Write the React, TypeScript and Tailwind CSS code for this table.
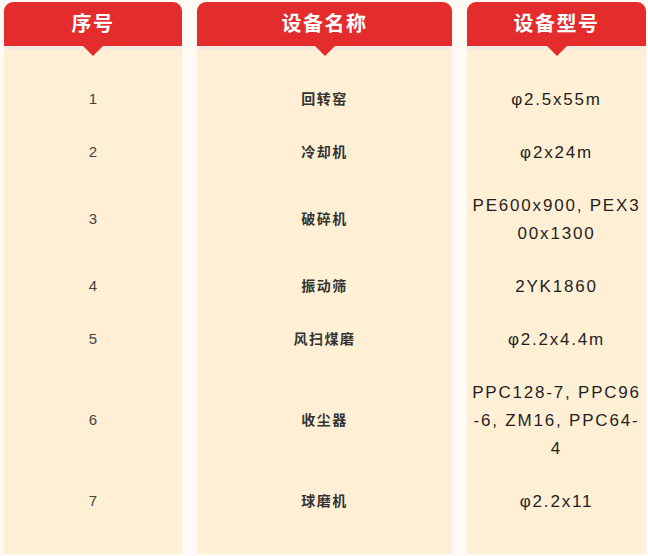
const rows = [
  { no: "1", name: "回转窑", model: "φ2.5x55m" },
  { no: "2", name: "冷却机", model: "φ2x24m" },
  { no: "3", name: "破碎机", model: "PE600x900, PEX300x1300" },
  { no: "4", name: "振动筛", model: "2YK1860" },
  { no: "5", name: "风扫煤磨", model: "φ2.2x4.4m" },
  { no: "6", name: "收尘器", model: "PPC128-7, PPC96-6, ZM16, PPC64-4" },
  { no: "7", name: "球磨机", model: "φ2.2x11" },
];

const headers = ["序号", "设备名称", "设备型号"];

function HeaderCell({ label }: { label: string }) {
  return (
    <div className="relative flex h-[48px] items-center justify-center rounded-t-[9px] border-b-4 border-[#f4eadf] bg-[#e42c2c]">
      <span className="text-[20px] font-bold tracking-[1.5px] text-white">{label}</span>
      <span className="absolute left-1/2 top-full z-10 -translate-x-1/2 border-x-[10px] border-t-[10px] border-x-transparent border-t-[#e42c2c]" />
    </div>
  );
}

export default function App() {
  return (
    <div
      className="min-h-[556px] w-[648px] bg-[#fffaf3] pl-[4px] pt-[2px]"
      style={{ fontFamily: '"Liberation Sans", "Noto Sans CJK SC", sans-serif' }}
    >
      <div className="grid grid-cols-[178px_255px_179px] gap-x-[15px]">
        {headers.map((h) => (
          <HeaderCell key={h} label={h} />
        ))}
        <div className="h-[23px] bg-[#fff0d5]" />
        <div className="h-[23px] bg-[#fff0d5]" />
        <div className="h-[23px] bg-[#fff0d5]" />
        {rows.map((r) => (
          <div key={r.no} className="contents">
            <div className="flex items-center justify-center bg-[#fff0d5] text-[15px] text-[#444]">{r.no}</div>
            <div className="flex items-center justify-center bg-[#fff0d5] text-[14px] font-semibold tracking-[1.5px] text-[#333]">
              {r.name}
            </div>
            <div className="flex items-center justify-center bg-[#fff0d5] px-[4px] py-[12.5px] text-center text-[17px] leading-[28px] tracking-[1.8px] break-all text-[#1f1f1f]">
              {r.model}
            </div>
          </div>
        ))}
        <div className="h-[26px] bg-[#fff0d5]" />
        <div className="h-[26px] bg-[#fff0d5]" />
        <div className="h-[26px] bg-[#fff0d5]" />
      </div>
    </div>
  );
}
